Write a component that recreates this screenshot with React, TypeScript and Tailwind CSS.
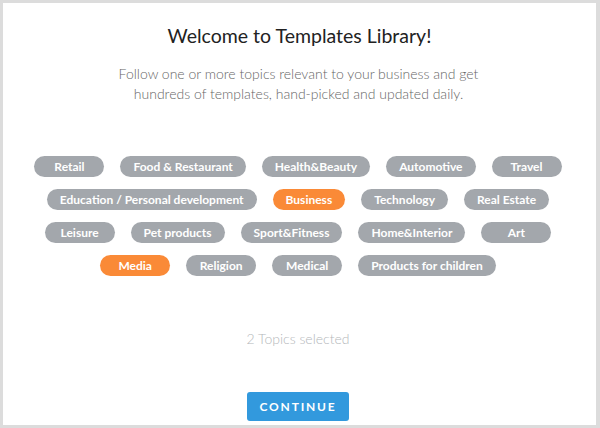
import React from "react";

const rows: { label: string; active?: boolean }[][] = [
  [{ label: "Retail" }, { label: "Food & Restaurant" }, { label: "Health&Beauty" }, { label: "Automotive" }, { label: "Travel" }],
  [{ label: "Education / Personal development" }, { label: "Business", active: true }, { label: "Technology" }, { label: "Real Estate" }],
  [{ label: "Leisure" }, { label: "Pet products" }, { label: "Sport&Fitness" }, { label: "Home&Interior" }, { label: "Art" }],
  [{ label: "Media", active: true }, { label: "Religion" }, { label: "Medical" }, { label: "Products for children" }],
];

export default function App() {
  return (
    <div className="w-[600px] h-[428px] bg-[#dcdcdc] pt-[3px] pl-[3px] pr-[4px] pb-[3px]" style={{ fontFamily: "Lato, 'Open Sans', sans-serif" }}>
      <div className="w-full h-[422px] bg-white flex flex-col items-center">
        <h1 className="mt-[21px] text-[19.5px] leading-[24px] text-[#222] font-normal">Welcome to Templates Library!</h1>
        <p className="mt-[16px] mr-[2px] text-[14px] leading-[20px] text-[#666] font-light text-center">
          Follow one or more topics relevant to your business and get
          <br />
          hundreds of templates, hand-picked and updated daily.
        </p>
        <div className="mt-[52px] mr-[3px] flex flex-col gap-[12px] items-center">
          {rows.map((row, i) => (
            <div key={i} className="flex gap-[16px] justify-center">
              {row.map((p) => (
                <div
                  key={p.label}
                  className={`h-[21px] min-w-[70px] px-[13px] rounded-full text-white text-[12px] leading-[21px] font-bold text-center whitespace-nowrap ${p.active ? "bg-[#fa8a37]" : "bg-[#a3a7ac]"}`}
                >
                  {p.label}
                </div>
              ))}
            </div>
          ))}
        </div>
        <div className="mt-[53px] mr-[3px] text-[14px] leading-[20px] text-[#b4b7ba] font-light">2 Topics selected</div>
        <button className="mt-[43px] mr-[3px] w-[102px] h-[29px] rounded-[3px] bg-[#3299dd] text-white text-[12px] font-bold tracking-[0.15em]">
          CONTINUE
        </button>
      </div>
    </div>
  );
}
